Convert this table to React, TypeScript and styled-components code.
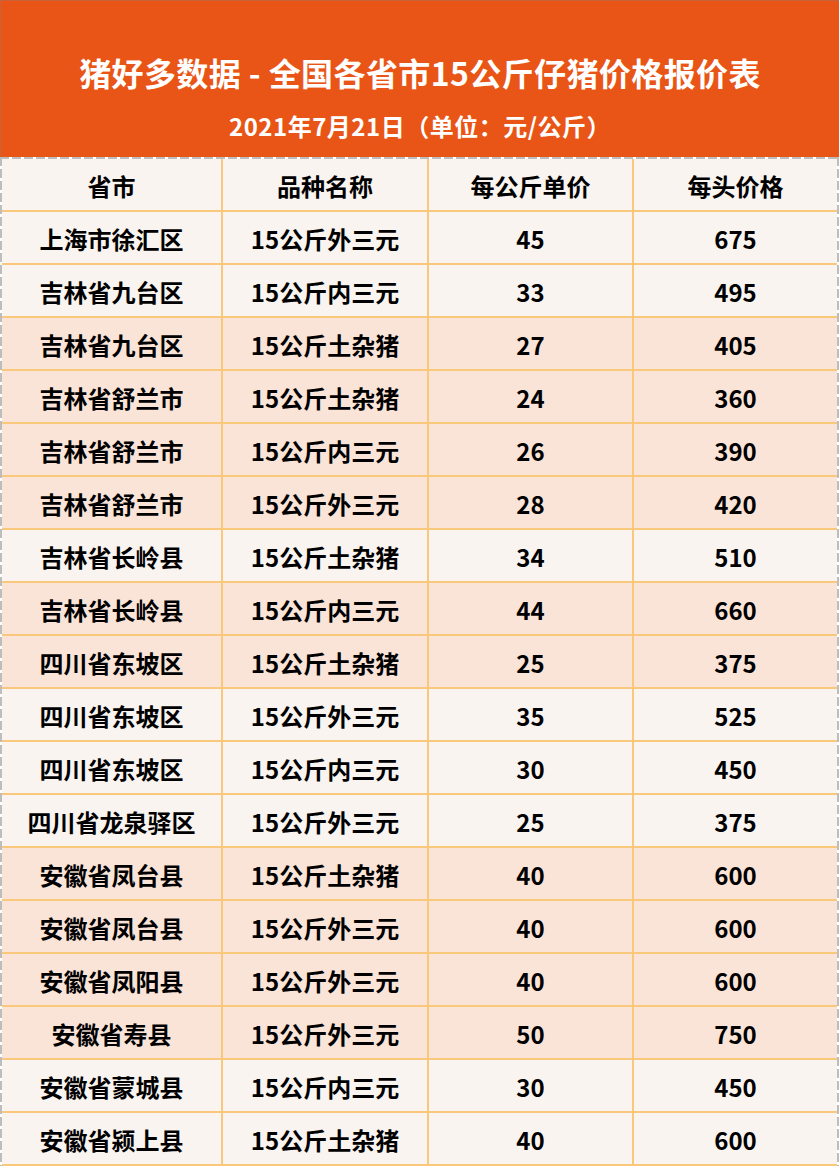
import React, {ReactElement} from 'react';
import styled, {createGlobalStyle} from 'styled-components';

const colors = {
  orange: '#e95516',
  line: '#fac87a',
  light: '#f9f4f0',
  peach: '#fae4d8',
  dash: '#bdbdbd',
};

const GlobalStyle = createGlobalStyle`
  html, body {
    margin: 0;
    padding: 0;
    background: #fff;
  }
  body {
    font-family: "Noto Sans CJK SC", "Noto Sans", sans-serif;
  }
`;

const Page = styled.div`
  width: 839px;
`;

const Banner = styled.header`
  height: 157px;
  box-sizing: border-box;
  background: ${colors.orange};
  border-top: 1px solid #c9623a;
  border-left: 1px solid #c9623a;
  display: flex;
  flex-direction: column;
  align-items: center;
  padding-top: 55px;
  color: #fff;
  font-weight: 700;
  h1 {
    margin: 0;
    font-size: 32px;
    line-height: 32px;
    font-weight: 700;
    letter-spacing: 0.4px;
    white-space: pre;
  }
  div.sub {
    margin-top: 26px;
    font-size: 24px;
    line-height: 24px;
    letter-spacing: 0.5px;
  }
`;

const dash = (dir: string) =>
  `repeating-linear-gradient(${dir}, ${colors.dash} 0 9px, transparent 9px 12px)`;

const Table = styled.div`
  padding: 2px 2px 0 2px;
  background:
    ${dash('90deg')} top left / 100% 2px no-repeat,
    ${dash('180deg')} top left / 2px 100% no-repeat,
    ${dash('180deg')} top right / 2px 100% no-repeat,
    #fff;
`;

const Row = styled.div<{$tone: 'light' | 'peach'}>`
  display: grid;
  grid-template-columns: 221px 206px 205px 1fr;
  height: 53px;
  box-sizing: border-box;
  border-bottom: 2px solid ${colors.line};
  background: ${(p) => (p.$tone === 'peach' ? colors.peach : colors.light)};
`;

const Cell = styled.div`
  display: flex;
  align-items: center;
  justify-content: center;
  font-size: 24px;
  line-height: 1;
  font-weight: 700;
  color: #000;
  padding-top: 2px;
  &:not(:last-child) {
    border-right: 2px solid ${colors.line};
  }
`;

type Item = [string, string, number, number, 'light' | 'peach'];

const rows: Item[] = [
  ['上海市徐汇区', '15公斤外三元', 45, 675, 'light'],
  ['吉林省九台区', '15公斤内三元', 33, 495, 'light'],
  ['吉林省九台区', '15公斤土杂猪', 27, 405, 'peach'],
  ['吉林省舒兰市', '15公斤土杂猪', 24, 360, 'peach'],
  ['吉林省舒兰市', '15公斤内三元', 26, 390, 'peach'],
  ['吉林省舒兰市', '15公斤外三元', 28, 420, 'peach'],
  ['吉林省长岭县', '15公斤土杂猪', 34, 510, 'light'],
  ['吉林省长岭县', '15公斤内三元', 44, 660, 'peach'],
  ['四川省东坡区', '15公斤土杂猪', 25, 375, 'peach'],
  ['四川省东坡区', '15公斤外三元', 35, 525, 'light'],
  ['四川省东坡区', '15公斤内三元', 30, 450, 'light'],
  ['四川省龙泉驿区', '15公斤外三元', 25, 375, 'light'],
  ['安徽省凤台县', '15公斤土杂猪', 40, 600, 'peach'],
  ['安徽省凤台县', '15公斤外三元', 40, 600, 'peach'],
  ['安徽省凤阳县', '15公斤外三元', 40, 600, 'peach'],
  ['安徽省寿县', '15公斤外三元', 50, 750, 'peach'],
  ['安徽省蒙城县', '15公斤内三元', 30, 450, 'light'],
  ['安徽省颍上县', '15公斤土杂猪', 40, 600, 'light'],
];

export default function App(): ReactElement {
  return (
    <Page>
      <GlobalStyle />
      <Banner>
        <h1>猪好多数据 - 全国各省市15公斤仔猪价格报价表</h1>
        <div className="sub">2021年7月21日（单位：元/公斤）</div>
      </Banner>
      <Table>
        <Row $tone="light">
          <Cell>省市</Cell>
          <Cell>品种名称</Cell>
          <Cell>每公斤单价</Cell>
          <Cell>每头价格</Cell>
        </Row>
        {rows.map(([area, kind, unit, head, tone], i) => (
          <Row key={i} $tone={tone}>
            <Cell>{area}</Cell>
            <Cell>{kind}</Cell>
            <Cell>{unit}</Cell>
            <Cell>{head}</Cell>
          </Row>
        ))}
      </Table>
    </Page>
  );
}
